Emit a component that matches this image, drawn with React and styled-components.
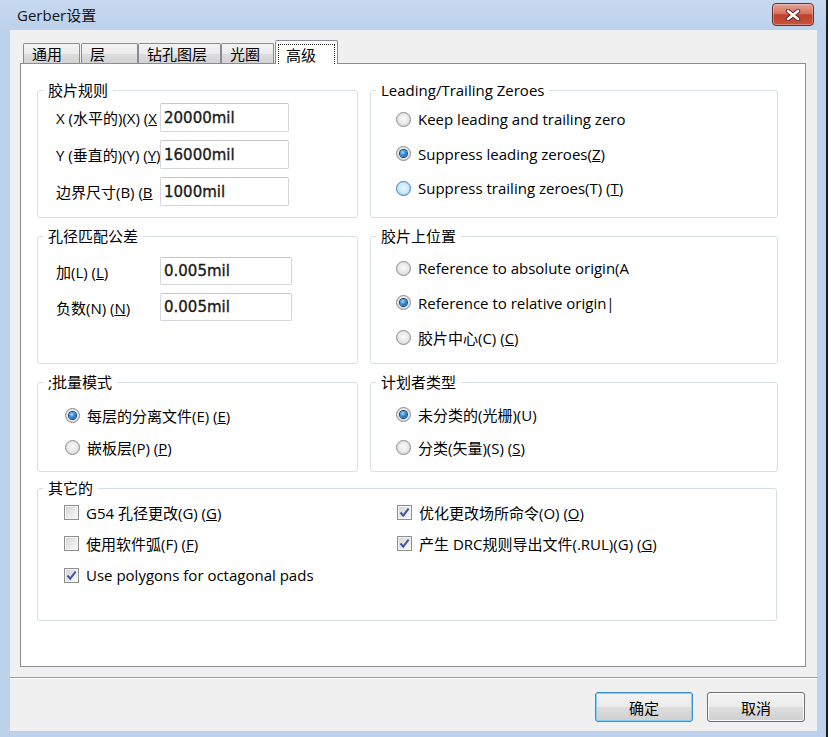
import styled, { createGlobalStyle } from 'styled-components'

const GlobalStyle = createGlobalStyle`
  html, body {
    margin: 0;
    background: #ffffff;
  }
  body {
    font-family: "Open Sans", "Noto Sans CJK SC", sans-serif;
    font-size: 15px;
    color: #000;
  }
`

const Window = styled.div`
  width: 826px;
  height: 737px;
  box-sizing: border-box;
  padding: 0 9px 6px 10px;
  display: flex;
  flex-direction: column;
  background: linear-gradient(to bottom, #c6d9f0 0px, #bcd1eb 30px, #bcd1eb 100%);
  box-shadow: 2px 0 0 #1b1b1b;
  overflow: hidden;
`

const TitleBar = styled.div`
  height: 30px;
  flex: none;
  display: flex;
  justify-content: space-between;
  align-items: flex-start;
  margin: 0 -9px 0 -10px;
`

const TitleText = styled.span`
  margin: 5px 0 0 17px;
  line-height: 20px;
  font-size: 15px;
  color: #141414;
`

const CloseButton = styled.div`
  width: 42px;
  height: 23px;
  margin: 3px 12px 0 0;
  box-sizing: border-box;
  border: 1px solid #6a2e2e;
  border-radius: 4px;
  background: linear-gradient(to bottom, #e7a296 0%, #d5725f 45%, #c1412b 52%, #c9533b 100%);
  box-shadow: inset 0 0 0 1px rgba(255, 255, 255, 0.3);
  display: grid;
  place-items: center;
`

const Client = styled.div`
  flex: 1;
  display: flex;
  flex-direction: column;
  background: #f0f0f0;
`

const TabArea = styled.div`
  padding: 10px 11px 0 10px;
`

const TabRow = styled.div`
  height: 23px;
  display: flex;
  align-items: flex-end;
`

const Tab = styled.div`
  position: relative;
  box-sizing: border-box;
  width: ${({ $w }) => $w}px;
  height: ${({ $selected }) => ($selected ? 24 : 20)}px;
  margin-left: ${({ $ml }) => $ml}px;
  margin-bottom: ${({ $selected }) => ($selected ? -1 : 0)}px;
  z-index: ${({ $selected }) => ($selected ? 1 : 0)};
  border: 1px solid #898c95;
  border-bottom: none;
  border-radius: 2px 2px 0 0;
  background: ${({ $selected }) =>
    $selected
      ? '#ffffff'
      : 'linear-gradient(to bottom, #f3f3f3 0%, #ebebeb 50%, #dddddd 51%, #d3d3d3 100%)'};
  display: flex;
  align-items: ${({ $selected }) => ($selected ? 'stretch' : 'center')};
  padding-left: ${({ $selected }) => ($selected ? 1 : 8)}px;
  font-size: 15px;
  line-height: 18px;
  white-space: nowrap;
`

const FocusRing = styled.span`
  flex: 1;
  margin: 3px 2px 0 1px;
  border: 1px dotted #222;
  border-bottom: none;
  padding-left: 7px;
  display: flex;
  align-items: center;
`

const Panel = styled.div`
  height: 604px;
  box-sizing: border-box;
  border: 1px solid #898c95;
  background: #ffffff;
  padding: 17px 28px 0 16px;
`

const Columns = styled.div`
  display: grid;
  grid-template-columns: 321px 408px;
  grid-template-rows: 137px 137px 99px;
  column-gap: 12px;
  row-gap: 9px;
`

const Group = styled.fieldset`
  margin: ${({ $mt }) => $mt || 0}px 0 0;
  padding: 0;
  min-width: 0;
  box-sizing: border-box;
  height: ${({ $h }) => ($h ? `${$h}px` : '100%')};
  border: 1px solid #d5dfe5;
  border-radius: 3px;
`

const Legend = styled.legend`
  margin-left: 5px;
  padding: 0 5px;
  line-height: 18px;
  font-size: 15px;
`

const GroupBody = styled.div`
  display: flex;
  flex-direction: column;
  padding: ${({ $pt }) => $pt}px 0 0 ${({ $pl }) => $pl}px;
  gap: ${({ $gap }) => $gap}px;
`

const FieldRow = styled.div`
  display: flex;
  align-items: center;
`

const FieldLabel = styled.span`
  width: 104px;
  white-space: nowrap;
  font-size: 15px;
`

const TextBox = styled.div`
  width: ${({ $w }) => $w}px;
  height: ${({ $h }) => $h}px;
  box-sizing: border-box;
  border: 1px solid #d3d6da;
  border-top-color: #c3c7cc;
  border-radius: 2px;
  background: #ffffff;
  padding-left: 3px;
  display: flex;
  align-items: center;
  font-family: "DejaVu Sans", sans-serif;
  font-size: 15px;
  -webkit-text-stroke: 0.35px #1a1a1a;
  color: #1a1a1a;
`

const OptionRow = styled.label`
  height: 20px;
  display: flex;
  align-items: center;
  gap: 7px;
  white-space: nowrap;
  font-size: 15px;
`

const RadioMark = styled.span`
  flex: none;
  width: 15px;
  height: 15px;
  box-sizing: border-box;
  border-radius: 50%;
  border: 1px solid ${({ $hot }) => ($hot ? '#3b7fb5' : '#8c8d8e')};
  background: ${({ $hot }) =>
    $hot
      ? 'radial-gradient(circle at 50% 45%, #eef8fe 0%, #c6e6fa 55%, #8cc6ed 100%)'
      : 'radial-gradient(circle at 50% 45%, #fbfbfb 0%, #e6e6e6 55%, #c4c4c4 100%)'};
  display: grid;
  place-items: center;

  &::after {
    content: '';
    display: ${({ $checked }) => ($checked ? 'block' : 'none')};
    width: 7px;
    height: 7px;
    border-radius: 50%;
    background: radial-gradient(circle at 40% 35%, #a9ddff 0%, #2a8ae0 45%, #0b4a8e 100%);
    box-shadow: 0 0 0 1px #1c3f66;
  }
`

const CheckMark = styled.span`
  flex: none;
  width: 15px;
  height: 15px;
  box-sizing: border-box;
  border: 1px solid #8e8f8f;
  background: linear-gradient(135deg, #d2d2d2 0%, #ececec 60%, #fbfbfb 100%);
  box-shadow: inset 0 0 0 1px #f4f4f4;
  display: grid;
  place-items: center;
`

const CheckColumns = styled.div`
  display: grid;
  grid-template-columns: 333px 1fr;
  padding: 5px 0 0 26px;
`

const CheckColumn = styled.div`
  display: flex;
  flex-direction: column;
  gap: 11.5px;
`

const Separator = styled.div`
  margin-top: 10px;
  border-top: 1px solid #a0a0a0;
  border-bottom: 1px solid #ffffff;
`

const ButtonRow = styled.div`
  display: flex;
  justify-content: flex-end;
  gap: 14px;
  padding: 13px 12px 0 0;
`

const Button = styled.div`
  width: 98px;
  height: 30px;
  box-sizing: border-box;
  border: 1px solid ${({ $default }) => ($default ? '#3c8fd0' : '#707070')};
  border-radius: 3px;
  background: linear-gradient(to bottom, #f3f3f3 0%, #ebebeb 50%, #dddddd 51%, #cfcfcf 100%);
  box-shadow: inset 0 0 0 1px ${({ $default }) => ($default ? '#7fd0f5' : '#fbfbfb')};
  display: grid;
  place-items: center;
  font-size: 15px;
`

function Radio({ checked, hot, children }) {
  return (
    <OptionRow>
      <RadioMark $checked={checked} $hot={hot} />
      <span>{children}</span>
    </OptionRow>
  )
}

function Check({ checked, children }) {
  return (
    <OptionRow>
      <CheckMark>
        {checked && (
          <svg width="11" height="11" viewBox="0 0 11 11">
            <path d="M1.5 5.5 L4.2 8.6 L9.6 1.6" fill="none" stroke="#3d55a5" strokeWidth="2" />
          </svg>
        )}
      </CheckMark>
      <span>{children}</span>
    </OptionRow>
  )
}

function Field({ label, value, w, h }) {
  return (
    <FieldRow>
      <FieldLabel>{label}</FieldLabel>
      <TextBox $w={w} $h={h}>{value}</TextBox>
    </FieldRow>
  )
}

const tabs = [
  { label: '通用', w: 57, ml: 3 },
  { label: '层', w: 57, ml: 1 },
  { label: '钻孔图层', w: 83, ml: 0 },
  { label: '光圈', w: 53, ml: 0 },
]

export default function App() {
  return (
    <>
      <GlobalStyle />
      <Window>
        <TitleBar>
          <TitleText>Gerber设置</TitleText>
          <CloseButton>
            <svg width="16" height="12" viewBox="0 0 16 12">
              <path d="M3 2 L13 10 M13 2 L3 10" stroke="#5a2323" strokeWidth="4.4" strokeLinecap="round" />
              <path d="M3 2 L13 10 M13 2 L3 10" stroke="#ffffff" strokeWidth="2.6" strokeLinecap="round" />
            </svg>
          </CloseButton>
        </TitleBar>
        <Client>
          <TabArea>
            <TabRow>
              {tabs.map((t) => (
                <Tab key={t.label} $w={t.w} $ml={t.ml}>
                  {t.label}
                </Tab>
              ))}
              <Tab $selected $w={63} $ml={1}>
                <FocusRing>高级</FocusRing>
              </Tab>
            </TabRow>
            <Panel>
              <Columns>
                <Group>
                  <Legend>胶片规则</Legend>
                  <GroupBody $pt={4} $pl={18} $gap={8}>
                    <Field label={<>X (水平的)(X) (<u>X</u></>} value="20000mil" w={129} h={29} />
                    <Field label={<>Y (垂直的)(Y) (<u>Y</u>)</>} value="16000mil" w={129} h={29} />
                    <Field label={<>边界尺寸(B) (<u>B</u></>} value="1000mil" w={129} h={29} />
                  </GroupBody>
                </Group>
                <Group>
                  <Legend>Leading/Trailing Zeroes</Legend>
                  <GroupBody $pt={10} $pl={25} $gap={14.5}>
                    <Radio>Keep leading and trailing zero</Radio>
                    <Radio checked>Suppress leading zeroes(<u>Z</u>)</Radio>
                    <Radio hot>
                      Suppress trailing zeroes(T) (<u>T</u>)
                    </Radio>
                  </GroupBody>
                </Group>
                <Group>
                  <Legend>孔径匹配公差</Legend>
                  <GroupBody $pt={12} $pl={18} $gap={8}>
                    <Field label={<>加(L) (<u>L</u>)</>} value="0.005mil" w={132} h={28} />
                    <Field label={<>负数(N) (<u>N</u>)</>} value="0.005mil" w={132} h={28} />
                  </GroupBody>
                </Group>
                <Group>
                  <Legend>胶片上位置</Legend>
                  <GroupBody $pt={13} $pl={25} $gap={14.5}>
                    <Radio>Reference to absolute origin(A</Radio>
                    <Radio checked>Reference to relative origin|</Radio>
                    <Radio>
                      胶片中心(C) (<u>C</u>)
                    </Radio>
                  </GroupBody>
                </Group>
                <Group>
                  <Legend>;批量模式</Legend>
                  <GroupBody $pt={14} $pl={27} $gap={12}>
                    <Radio checked>
                      每层的分离文件(E) (<u>E</u>)
                    </Radio>
                    <Radio>
                      嵌板层(P) (<u>P</u>)
                    </Radio>
                  </GroupBody>
                </Group>
                <Group>
                  <Legend>计划者类型</Legend>
                  <GroupBody $pt={13} $pl={25} $gap={13}>
                    <Radio checked>未分类的(光栅)(U)</Radio>
                    <Radio>
                      分类(矢量)(S) (<u>S</u>)
                    </Radio>
                  </GroupBody>
                </Group>
              </Columns>
              <Group $mt={7} $h={142}>
                <Legend>其它的</Legend>
                <CheckColumns>
                  <CheckColumn>
                    <Check>
                      G54 孔径更改(G) (<u>G</u>)
                    </Check>
                    <Check>
                      使用软件弧(F) (<u>F</u>)
                    </Check>
                    <Check checked>Use polygons for octagonal pads</Check>
                  </CheckColumn>
                  <CheckColumn>
                    <Check checked>
                      优化更改场所命令(O) (<u>O</u>)
                    </Check>
                    <Check checked>
                      产生 DRC规则导出文件(.RUL)(G) (<u>G</u>)
                    </Check>
                  </CheckColumn>
                </CheckColumns>
              </Group>
            </Panel>
          </TabArea>
          <Separator />
          <ButtonRow>
            <Button $default>确定</Button>
            <Button>取消</Button>
          </ButtonRow>
        </Client>
      </Window>
    </>
  )
}
